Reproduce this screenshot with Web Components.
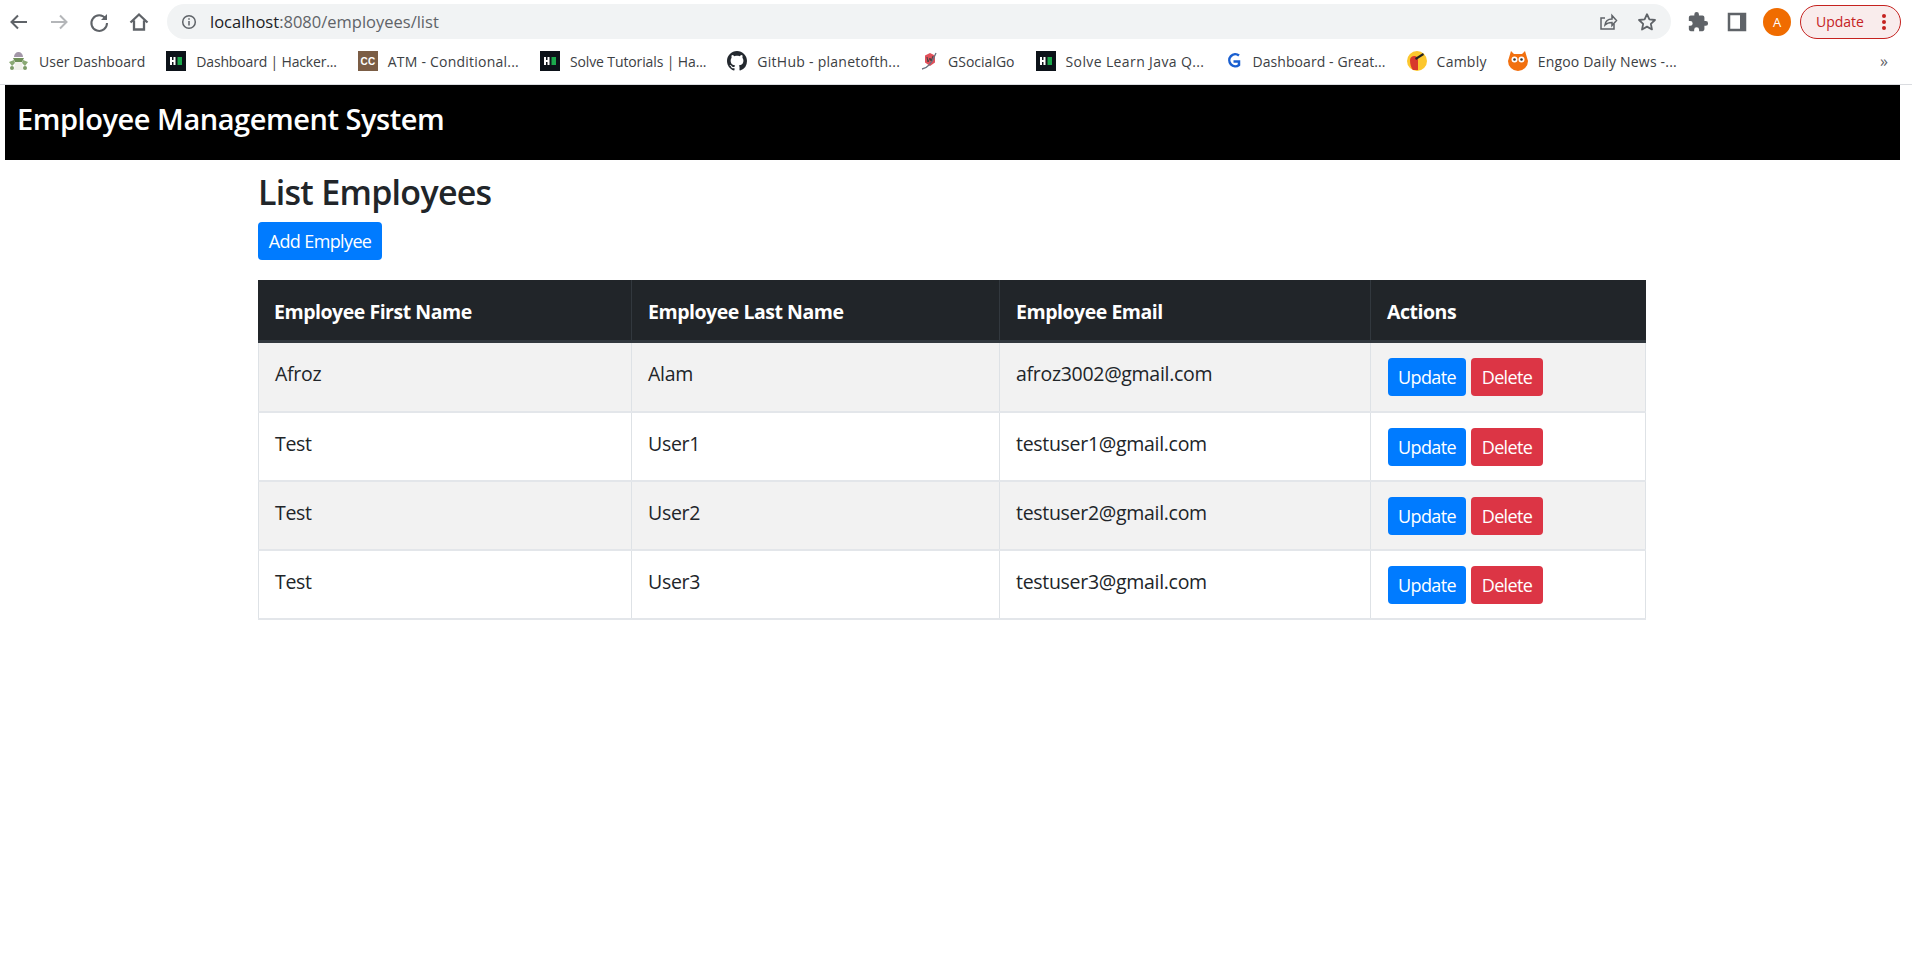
<!DOCTYPE html>
<html lang="en"><head><meta charset="utf-8"><title>Employee Management System</title>
<style>
html,body{margin:0;padding:0;background:#fff;height:100%;overflow:hidden}
body{font-family:"Open Sans","Noto Sans",sans-serif;color:#212529}
</style></head><body>
<browser-toolbar></browser-toolbar>
<bookmark-bar></bookmark-bar>
<app-header>Employee Management System</app-header>
<employee-list></employee-list>
<script>
const F='"Open Sans","Noto Sans",sans-serif';
class BrowserToolbar extends HTMLElement{connectedCallback(){this.attachShadow({mode:'open'}).innerHTML=`
<style>
:host{display:flex;height:44px;align-items:center;font-family:${F};box-sizing:border-box;padding:0 11px 1px 7px}
svg{display:block;flex:none}
.nav{display:flex;gap:16px;align-items:center;margin-right:16px}
.omni{flex:1;height:35px;background:#f1f3f4;border-radius:18px;display:flex;align-items:center;padding:0 13px 0 14px;font-size:16.500px;color:#5f6368}
.omni b{font-weight:400;color:#202124}
.u{flex:1;margin-left:13px}
.omni svg+svg{margin-left:18px}
.right{display:flex;align-items:center;margin-left:16px}
.av{width:28px;height:28px;border-radius:50%;background:#f06c00;color:#fff;font-size:13px;display:flex;align-items:center;justify-content:center;margin:0 9px 0 16px}
.up{width:101px;height:34px;box-sizing:border-box;border:1px solid #c5221f;border-radius:17px;background:#f9ecec;color:#c5221f;font-size:14px;display:flex;align-items:center;justify-content:space-between;padding:0 14px 0 15px}
</style>
<div class="nav">
<svg width="24" height="24" viewBox="0 0 24 24" fill="none" stroke="#5f6368" stroke-width="2"><path d="M20 12H5M11 5.500 4.500 12l6.500 6.500"/></svg>
<svg width="24" height="24" viewBox="0 0 24 24" fill="none" stroke="#b4b6b9" stroke-width="2"><path d="M4 12h15M13 5.500l6.500 6.500-6.500 6.500"/></svg>
<svg width="24" height="24" viewBox="0 0 24 24" fill="none" stroke="#5f6368" stroke-width="2"><path d="M18.500 8.500A7.800 7.800 0 1 0 20 13"/><path d="M20 4v6h-6z" stroke="none" fill="#5f6368"/></svg>
<svg width="24" height="24" viewBox="0 0 24 24" fill="none" stroke="#5f6368" stroke-width="2.300"><path d="M3.500 12.500 12 4.500l8.500 8M7 10.500v9h10v-9"/></svg>
</div>
<div class="omni">
<svg width="16" height="16" viewBox="0 0 16 16" fill="none" stroke="#5f6368" stroke-width="1.500"><circle cx="8" cy="8" r="6.300"/><path d="M8 7v4.500M8 4.300v1.500"/></svg>
<span class="u"><b>localhost</b>:8080/employees/list</span>
<svg width="20" height="20" viewBox="0 0 20 20" fill="none" stroke="#5f6368" stroke-width="1.500"><path d="M16 12v5H3V6h4"/><path d="M7 13c.5-4 3-6 7-6V3.500l4.500 5-4.500 5V10.500c-3 0-5 .5-7 2.500z"/></svg>
<svg width="22" height="22" viewBox="0 0 24 24" fill="none" stroke="#5f6368" stroke-width="2" stroke-linejoin="round"><path d="m12 3.500 2.600 5.600 6.100.7-4.500 4.200 1.200 6.100L12 17l-5.400 3.100 1.200-6.100-4.500-4.200 6.100-.7z"/></svg>
</div>
<div class="right">
<svg width="22" height="22" viewBox="0 0 24 24" fill="#5f6368"><path d="M20.500 11H19V7a2 2 0 0 0-2-2h-4V3.500a2.500 2.500 0 0 0-5 0V5H4a2 2 0 0 0-2 2v3.800h1.500a2.700 2.700 0 0 1 0 5.400H2V20a2 2 0 0 0 2 2h3.800v-1.500a2.700 2.700 0 0 1 5.400 0V22H17a2 2 0 0 0 2-2v-4h1.500a2.500 2.500 0 0 0 0-5z"/></svg>
<svg width="20" height="20" viewBox="0 0 20 20" style="margin-left:18px" fill="none" stroke="#5f6368"><rect x="2" y="2" width="16" height="16" stroke-width="2.500"/><path d="M15.500 2v16" stroke-width="5"/></svg>
<div class="av">A</div>
<div class="up"><span>Update</span><svg width="4" height="16" viewBox="0 0 4 16" fill="#c5221f"><circle cx="2" cy="2" r="2"/><circle cx="2" cy="8" r="2"/><circle cx="2" cy="14" r="2"/></svg></div>
</div>`}}
customElements.define('browser-toolbar',BrowserToolbar);

class BookMark extends HTMLElement{connectedCallback(){this.attachShadow({mode:'open'}).innerHTML=`
<style>:host{display:flex;align-items:center;gap:10px;font-size:14px;letter-spacing:var(--ls,-.17px);color:#3c4043;white-space:nowrap;font-family:${F}}
::slotted(svg){display:block;flex:none}</style><slot name="i"></slot><slot></slot>`}}
customElements.define('book-mark',BookMark);

const HR=`<svg slot="i" width="20" height="20" viewBox="0 0 20 20"><rect width="20" height="20" fill="#0c1219"/><path d="M4 6h2v3h1.500V6h2v8h-2v-3H6v3H4z" fill="#fff"/><rect x="11.500" y="6" width="4.500" height="8" fill="#1ba94c"/></svg>`;
class BookmarkBar extends HTMLElement{connectedCallback(){this.attachShadow({mode:'open'}).innerHTML=`
<style>:host{display:flex;height:41px;box-sizing:border-box;padding:0 0 6px 8px;align-items:center;gap:21px;border-bottom:1px solid #dadce0;font-family:${F}}
.more{margin-left:auto;margin-right:24px;color:#5f6368;font-size:16px}</style>
<book-mark style="--ls:0px"><svg slot="i" width="21" height="22" viewBox="0 0 21 22"><path d="M6 7a4.500 5 0 0 1 9 0z" fill="#a397a8"/><path d="M5 8h11l-2 4H7z" fill="#6f8f58"/><path d="M1 12l5-2 1 3-3 3zM20 12l-5-2-1 3 3 3z" fill="#8aa874"/><path d="M7 12h7l1 8H6z" fill="#f0f0ea"/><circle cx="4" cy="18" r="2" fill="#7d9a68"/><circle cx="17" cy="18" r="2" fill="#7d9a68"/></svg>User Dashboard</book-mark>
<book-mark>${HR}Dashboard | Hacker...</book-mark>
<book-mark style="--ls:.22px"><svg slot="i" width="20" height="20" viewBox="0 0 20 20"><rect width="20" height="20" fill="#7b5d45"/><text x="10" y="14" text-anchor="middle" font-size="10" font-weight="700" font-family="Liberation Sans" fill="#fff">CC</text></svg>ATM - Conditional...</book-mark>
<book-mark style="--ls:-.12px">${HR}Solve Tutorials | Ha...</book-mark>
<book-mark style="--ls:.26px"><svg slot="i" width="20" height="20" viewBox="0 0 16 16" fill="#24292f"><path d="M8 0C3.580 0 0 3.580 0 8c0 3.540 2.290 6.530 5.470 7.590.4.070.55-.17.55-.38 0-.19-.01-.82-.01-1.490-2.010.37-2.530-.49-2.690-.94-.09-.23-.48-.94-.82-1.130-.28-.15-.68-.52-.01-.53.63-.01 1.080.58 1.230.82.720 1.210 1.870.87 2.330.66.070-.52.280-.87.510-1.070-1.780-.2-3.640-.89-3.640-3.950 0-.87.310-1.590.820-2.150-.08-.2-.36-1.020.08-2.120 0 0 .67-.21 2.200.82.640-.18 1.320-.27 2-.27s1.360.09 2 .27c1.530-1.040 2.200-.82 2.200-.82.440 1.100.16 1.920.08 2.120.51.560.82 1.270.82 2.150 0 3.070-1.870 3.750-3.650 3.950.29.250.54.730.54 1.480 0 1.070-.01 1.930-.01 2.200 0 .21.150.46.550.38A8.010 8.010 0 0 0 16 8c0-4.420-3.580-8-8-8z"/></svg>GitHub - planetofth...</book-mark>
<book-mark style="--ls:0px"><svg slot="i" width="17" height="20" viewBox="0 0 17 20"><path d="M9 2l5 2.500v7L9 15l-5-3.500v-7z" fill="#e0505a"/><path d="M1 18c6-1 11-8 14-16" fill="none" stroke="#6b7280" stroke-width="1.300"/><path d="M6 6l1 5 2-4 1 3 2-5" fill="none" stroke="#444" stroke-width="1"/></svg>GSocialGo</book-mark>
<book-mark style="--ls:.38px">${HR}Solve Learn Java Q...</book-mark>
<book-mark style="--ls:.08px"><svg slot="i" width="17" height="20" viewBox="0 0 17 20" fill="none" stroke="#1a5fd0" stroke-width="2.500"><path d="M14 4.500A6 6 0 1 0 14 14V10.500H8.500"/></svg>Dashboard - Great...</book-mark>
<book-mark style="--ls:.23px"><svg slot="i" width="20" height="20" viewBox="0 0 20 20"><circle cx="10" cy="10" r="10" fill="#fcc72e"/><path d="M3 9c0-3 3-4.500 5-4 2 .5 3 2 3 4v10H6C4 17 3 13 3 9z" fill="#d8382c"/><path d="M8 7 16 2l1 2-8 5z" fill="#222"/></svg>Cambly</book-mark>
<book-mark style="--ls:.19px"><svg slot="i" width="20" height="20" viewBox="0 0 20 20"><path d="M3 0l3 3h8l3-3 3 10a10 10 0 0 1-20 0z" fill="#f2700f"/><circle cx="6.500" cy="8.500" r="3" fill="#fff"/><circle cx="13.500" cy="8.500" r="3" fill="#fff"/><circle cx="6.500" cy="8.500" r="1.300" fill="#333"/><circle cx="13.500" cy="8.500" r="1.300" fill="#333"/></svg>Engoo Daily News -...</book-mark>
<span class="more">»</span>`}}
customElements.define('bookmark-bar',BookmarkBar);

class AppHeader extends HTMLElement{connectedCallback(){this.attachShadow({mode:'open'}).innerHTML=`
<style>:host{display:flex;align-items:center;box-sizing:border-box;height:75px;margin:0 12px 0 5px;padding:0 12px 9px;background:#000;color:#fff;font-family:${F};font-size:29px;font-weight:600;letter-spacing:-.45px;white-space:nowrap}</style><slot></slot>`}}
customElements.define('app-header',AppHeader);

class UiButton extends HTMLElement{connectedCallback(){this.attachShadow({mode:'open'}).innerHTML=`
<style>:host{display:inline-flex;align-items:center;justify-content:center;box-sizing:border-box;height:var(--h,38px);width:var(--w);background:var(--b,#007bff);color:#fff;border-radius:4px;font-family:${F};font-size:18px;letter-spacing:-.62px;white-space:nowrap}</style><slot></slot>`}}
customElements.define('ui-button',UiButton);

class EmployeeRow extends HTMLElement{connectedCallback(){const d=this.dataset;this.attachShadow({mode:'open'}).innerHTML=`
<style>:host{display:grid;grid-template-columns:373px 368px 371px 1fr;height:var(--rh,69px);box-sizing:border-box;border-bottom:2px solid #e3e6ea;background:var(--bg,#fff);font-family:${F};font-size:19.500px;letter-spacing:-.3px;color:#212529}
.c{border-left:1px solid #dee2e6;padding:16px 0 0 16px;box-sizing:border-box;line-height:30px;white-space:nowrap}
.c:first-child{padding-left:15px}
.a{display:flex;gap:5px;align-items:flex-start;padding:15px 0 0 17px}
.l{border-right:1px solid #dee2e6}</style>
<div class="c">${d.f}</div><div class="c">${d.l}</div><div class="c">${d.e}</div>
<div class="c a l"><ui-button style="--w:78px">Update</ui-button><ui-button style="--w:72px;--b:#dc3545">Delete</ui-button></div>`}}
customElements.define('employee-row',EmployeeRow);

class EmployeeList extends HTMLElement{connectedCallback(){this.attachShadow({mode:'open'}).innerHTML=`
<style>:host{display:block;width:1388px;margin-left:258px;font-family:${F}}
h2{margin:0;padding:11px 0 0 0;height:51px;font-size:34px;line-height:42px;font-weight:600;letter-spacing:-.72px;color:#212529;white-space:nowrap}
.add{display:block;height:38px;margin-bottom:20px}
.head{display:grid;grid-template-columns:373px 368px 371px 1fr;height:63px;background:#212529;color:#fff;font-size:19.500px;font-weight:700;letter-spacing:-.47px;border-bottom:3px solid #32383e;box-sizing:border-box}
.head div{padding:17px 0 0 16px;line-height:30px;border-left:1px solid #32383e;white-space:nowrap}
.head div:first-child{border-left:0}
</style>
<h2>List Employees</h2>
<div class="add"><ui-button style="--w:124px">Add Emplyee</ui-button></div>
<div class="head"><div>Employee First Name</div><div>Employee Last Name</div><div>Employee Email</div><div>Actions</div></div>
<employee-row style="--bg:#f2f2f2;--rh:70px" data-f="Afroz" data-l="Alam" data-e="afroz3002@gmail.com"></employee-row>
<employee-row data-f="Test" data-l="User1" data-e="testuser1@gmail.com"></employee-row>
<employee-row style="--bg:#f2f2f2" data-f="Test" data-l="User2" data-e="testuser2@gmail.com"></employee-row>
<employee-row data-f="Test" data-l="User3" data-e="testuser3@gmail.com"></employee-row>`}}
customElements.define('employee-list',EmployeeList);
</script></body></html>
